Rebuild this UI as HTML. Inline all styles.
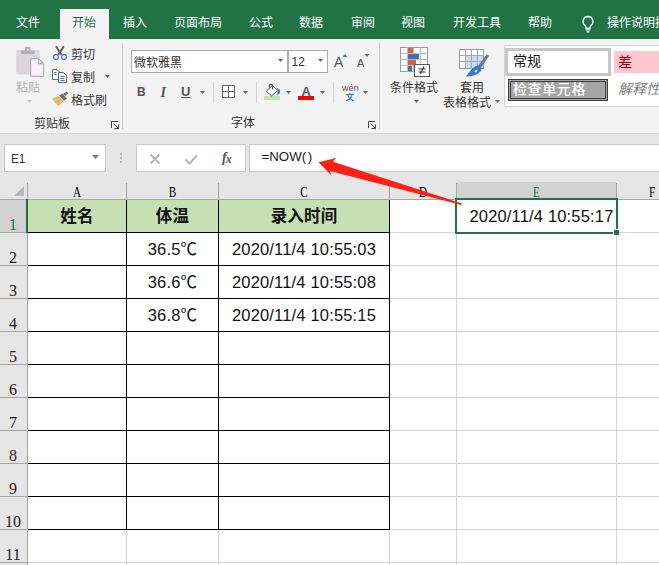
<!DOCTYPE html>
<html><head><meta charset="utf-8">
<style>
html,body{margin:0;padding:0;}
body{width:659px;height:565px;overflow:hidden;position:relative;background:#fff;font-family:"Liberation Sans","Noto Sans CJK SC",sans-serif;font-size:12px;color:#333;}
.a{position:absolute;}
.t{position:absolute;white-space:nowrap;line-height:1;}
#tabs{left:0;top:0;width:659px;height:39px;background:#217346;}
#tabs .t{color:#fff;font-size:12px;top:17px;}
#acttab{left:60px;top:9px;width:49px;height:30px;background:#f3f3f3;}
#ribbon{left:0;top:39px;width:659px;height:94px;background:#f3f3f3;}
#ribline{left:0;top:133px;width:659px;height:1px;background:#dadada;}
#fbar{left:0;top:134px;width:659px;height:47px;background:#e6e6e6;}
.box{position:absolute;background:#fff;border:1px solid #c8c8c8;box-sizing:border-box;}
.sep{position:absolute;width:1px;background:#d4d4d4;}
.dd{position:absolute;width:5px;height:3px;background:#666;clip-path:polygon(0 0,100% 0,50% 100%);margin-top:-1px;}
.rt{color:#333;font-size:12px;}
#grid{left:0;top:181px;width:659px;height:384px;}
.gl{position:absolute;background:#d4d4d4;}
.bl{position:absolute;background:#000;}
.cell{position:absolute;text-align:center;font-size:16.500px;letter-spacing:.17px;color:#111;line-height:33px;white-space:nowrap;}
.hd{font-weight:bold;}
.chl{transform:scaleX(.8);}
.chl,.rhl{text-align:center;font-family:"Liberation Serif","Noto Serif CJK SC",serif;font-size:14px;}
.rhl{font-size:16px;}
</style></head><body>

<!-- tab strip -->
<div id="tabs" class="a">
  <div id="acttab" class="a"></div>
  <span class="t" style="left:16px">文件</span>
  <span class="t" style="left:72px;color:#217346">开始</span>
  <span class="t" style="left:123px">插入</span>
  <span class="t" style="left:174px">页面布局</span>
  <span class="t" style="left:249px">公式</span>
  <span class="t" style="left:299px">数据</span>
  <span class="t" style="left:351px">审阅</span>
  <span class="t" style="left:401px">视图</span>
  <span class="t" style="left:453px">开发工具</span>
  <span class="t" style="left:528px">帮助</span>
  <span class="t" style="left:607px">操作说明搜索</span>
  <svg class="a" style="left:579px;top:13.500px" width="18" height="20" viewBox="0 0 18 20"><path d="M9 2.5a5 5 0 0 0-2.8 9.1c.5.5.8 1.200.8 2v.9h4v-.9c0-.8.300-1.500.8-2A5 5 0 0 0 9 2.500z" fill="none" stroke="#fff" stroke-width="1.300"/><path d="M6.800 16h4.400M7.600 17.800h2.800" stroke="#fff" stroke-width="1.200"/></svg>
</div>

<!-- ribbon -->
<div id="ribbon" class="a"></div>
<div id="ribline" class="a"></div>
<div id="fbar" class="a"></div>

<div id="rib" class="a" style="left:0;top:0">
  <!-- clipboard group -->
  <svg class="a" style="left:14px;top:45px" width="32" height="33" viewBox="0 0 32 33">
    <rect x="2.250" y="5.200" width="23.500" height="24.300" rx="1" fill="#dad6da"/>
    <rect x="7" y="5.400" width="13.600" height="3.600" rx=".8" fill="#b3afb3"/>
    <rect x="11" y="2" width="5.700" height="4.500" rx="1.200" fill="#b3afb3"/>
    <circle cx="13.850" cy="4.600" r="1" fill="#f3f3f3"/>
    <path d="M16.700 13.700h8l5 5v12.600h-13z" fill="#f6f1f6" stroke="#aaa6aa" stroke-width="1"/>
    <path d="M24.700 13.700v5h5" fill="none" stroke="#aaa6aa" stroke-width="1"/>
  </svg>
  <span class="t" style="left:16px;top:82px;color:#b2b2b2;font-size:12px">粘贴</span>
  <div class="dd" style="left:27px;top:101px;background:#c0c0c0"></div>

  <svg class="a" style="left:52px;top:44px" width="16" height="17" viewBox="0 0 16 17">
    <path d="M4 2.200L9.400 10.800M11.800 2.200L6.400 10.800" stroke="#5a5a5a" stroke-width="1.900" fill="none"/>
    <circle cx="4" cy="13" r="2.400" fill="none" stroke="#3b73b9" stroke-width="1.100"/>
    <circle cx="12" cy="13" r="2.400" fill="none" stroke="#3b73b9" stroke-width="1.100"/>
  </svg>
  <span class="t rt" style="left:71px;top:49px">剪切</span>

  <svg class="a" style="left:51px;top:68px" width="17" height="17" viewBox="0 0 17 17">
    <path d="M1.500 1.500h4.500l2.500 2.500v7.500h-7z" fill="#fff" stroke="#666" stroke-width="1"/>
    <path d="M3 4.500h2.500M3 6.500h2.500" stroke="#3b73b9" stroke-width="1"/>
    <path d="M7.500 4.500h5l3 3v7h-8z" fill="#fff" stroke="#666" stroke-width="1"/>
    <path d="M9.500 8.500h4M9.500 10.500h4M9.500 12.500h4" stroke="#3b73b9" stroke-width="1"/>
  </svg>
  <span class="t rt" style="left:71px;top:72px">复制</span>
  <div class="dd" style="left:105px;top:76px"></div>

  <svg class="a" style="left:51px;top:91px" width="18" height="16" viewBox="0 0 18 16">
    <path d="M1.100 7.800L7.800 5L12.500 10.200L7.300 14.900z" fill="#eab765"/>
    <path d="M8.300 4.600L11.500 2.600L16 7.500L12.900 9.800z" fill="#6e6e6e"/>
    <path d="M12.400 2.800L15.500.600L17.300 2.600L14.200 4.900z" fill="#6e6e6e"/>
  </svg>
  <span class="t rt" style="left:71px;top:95px">格式刷</span>

  <span class="t rt" style="left:34px;top:118px">剪贴板</span>
  <svg class="a" style="left:111px;top:121px" width="9" height="9" viewBox="0 0 9 9"><path d="M.5 7V.5H7M2.500 2.500l5 5M7.500 3.500v4h-4" fill="none" stroke="#444" stroke-width="1"/></svg>
  <div class="sep" style="left:122px;top:43px;height:86px;background:#c8c8c8"></div>

  <!-- font group -->
  <div class="box" style="left:131px;top:50px;width:157px;height:23px;border-color:#ababab"></div>
  <div class="box" style="left:288px;top:50px;width:40px;height:23px;border-color:#ababab"></div>
  <span class="t rt" style="left:134px;top:57px">微软雅黑</span>
  <div class="dd" style="left:278px;top:60px"></div>
  <span class="t rt" style="left:291.500px;top:56px;font-size:12px">12</span>
  <div class="dd" style="left:318px;top:60px"></div>

  <span class="t" style="left:334px;top:55px;font-size:14px;color:#555">A</span>
  <div class="a" style="left:342.500px;top:54px;width:5px;height:3px;background:#3b73b9;clip-path:polygon(0 100%,100% 100%,50% 0)"></div>
  <span class="t" style="left:357px;top:58px;font-size:11px;color:#555">A</span>
  <div class="a" style="left:364.500px;top:54px;width:5px;height:3px;background:#3b73b9;clip-path:polygon(0 0,100% 0,50% 100%)"></div>

  <span class="t" style="left:137px;top:86px;font-size:12px;font-weight:bold;color:#555">B</span>
  <span class="t" style="left:160.500px;top:85.500px;font-size:14px;font-style:italic;font-weight:bold;color:#555;font-family:'Liberation Serif',serif">I</span>
  <span class="t" style="left:181px;top:85px;font-size:13px;font-weight:bold;color:#555;text-decoration:underline">U</span>
  <div class="dd" style="left:200px;top:92px"></div>
  <div class="sep" style="left:213px;top:82px;height:21px"></div>
  <svg class="a" style="left:222px;top:85px" width="14" height="14" viewBox="0 0 14 14"><path d="M.5.500h12v12h-12zM6.500.500v12M.5 6.500h12" fill="#fff" stroke="#666" stroke-width="1"/></svg>
  <div class="dd" style="left:243px;top:92px"></div>
  <div class="sep" style="left:256px;top:82px;height:21px"></div>

  <svg class="a" style="left:263px;top:83px" width="19" height="18" viewBox="0 0 19 18">
    <rect x="1" y="13" width="16" height="4" fill="#c6e0b4"/>
    <path d="M13 4.800Q17.800 6.200 17 9.200Q16.300 11.800 14.200 12.600L14.300 9.500L15.200 7.400Z" fill="#3b73b9"/>
    <path d="M9.300 2.200L14.700 7.500L8.700 12.900L3.300 8.400Z" fill="#fff" stroke="#555" stroke-width="1"/>
    <path d="M6.400 5.500V1.500H9.500V6.500" fill="none" stroke="#555" stroke-width="1"/>
  </svg>
  <div class="dd" style="left:286px;top:92px"></div>
  <span class="t" style="left:301.500px;top:84.500px;font-size:13px;font-weight:bold;color:#5a5a5a">A</span>
  <div class="a" style="left:298px;top:96px;width:16px;height:4px;background:#f00"></div>
  <div class="dd" style="left:320px;top:92px"></div>
  <div class="sep" style="left:333px;top:82px;height:21px"></div>
  <span class="t" style="left:342px;top:84px;font-size:9px;color:#555">wén</span>
  <span class="t" style="left:345.500px;top:92.500px;font-size:8.500px;color:#3b73b9;font-weight:bold">文</span>
  <div class="dd" style="left:363px;top:92px"></div>

  <span class="t rt" style="left:231px;top:117px">字体</span>
  <svg class="a" style="left:368px;top:121px" width="9" height="9" viewBox="0 0 9 9"><path d="M.5 7V.5H7M2.500 2.500l5 5M7.500 3.500v4h-4" fill="none" stroke="#444" stroke-width="1"/></svg>
  <div class="sep" style="left:379px;top:43px;height:86px;background:#c8c8c8"></div>

  <!-- styles group -->
  <svg class="a" style="left:399px;top:46px" width="33" height="32" viewBox="0 0 33 32">
    <rect x="1.500" y="1.500" width="27" height="24" fill="#fff" stroke="#9a9a9a"/>
    <path d="M8.500 1.500v24M14.500 1.500v24M21.500 1.500v24M1.500 7.500h27M1.500 13.500h27M1.500 19.500h27" stroke="#bdbdbd" fill="none"/>
    <rect x="9" y="2" width="5" height="5" fill="#d9603b"/>
    <rect x="9" y="8" width="11" height="5" fill="#3b73b9"/>
    <rect x="9" y="14" width="8" height="5" fill="#d9603b"/>
    <rect x="9" y="20" width="4" height="5" fill="#3b73b9"/>
    <rect x="15.500" y="18.500" width="15" height="12" fill="#fff" stroke="#555"/>
    <path d="M19.500 23h7M19.500 26h7M25 20.500l-3.600 7.500" stroke="#333" stroke-width="1.100" fill="none"/>
  </svg>
  <span class="t rt" style="left:390px;top:82px">条件格式</span>
  <div class="dd" style="left:414px;top:101px"></div>

  <svg class="a" style="left:458px;top:48px" width="32" height="30" viewBox="0 0 32 30">
    <rect x="1.500" y="1.500" width="24" height="19" fill="#fff" stroke="#9a9a9a"/>
    <rect x="7" y="7" width="18" height="13" fill="#c9daf0"/>
    <path d="M7.500 1.500v19M13.500 1.500v19M19.500 1.500v19M1.500 7.500h24M1.500 13.500h24" stroke="#a8a8a8" fill="none"/>
    <path d="M29.900 7.100L21.500 18.800" stroke="#777" stroke-width="3" fill="none"/>
    <path d="M20.500 17.500C16 17.500 13 22 8 28.200c6 .8 11-1.200 14.500-4.700 1.500-1.500 1.200-4-.5-5.500z" fill="#3b7bc8"/>
    <ellipse cx="18" cy="23" rx="1.600" ry="1" transform="rotate(-40 18 23)" fill="#e8f0fa"/>
  </svg>
  <span class="t rt" style="left:460px;top:82px">套用</span>
  <span class="t rt" style="left:443px;top:97px">表格格式</span>
  <div class="dd" style="left:495px;top:101px"></div>

  <div class="box" style="left:504px;top:45px;width:160px;height:62px;border-color:#d6d6d6"></div>
  <div class="a" style="left:505px;top:48px;width:106px;height:28px;box-sizing:border-box;border:3px solid #c6c6c6;background:#fff"></div>
  <span class="t" style="left:513px;top:53.500px;font-size:14px;color:#111">常规</span>
  <div class="a" style="left:614px;top:51px;width:50px;height:22px;background:#ffc7ce"></div>
  <span class="t" style="left:618px;top:55px;font-size:14px;color:#9c0006">差</span>
  <div class="a" style="left:508px;top:79px;width:100px;height:22px;box-sizing:border-box;border:3px double #3f3f3f;background:#a5a5a5"></div>
  <span class="t" style="left:513px;top:82px;font-size:14px;color:#fff;font-weight:500;letter-spacing:.6px">检查单元格</span>
  <span class="t" style="left:618px;top:82px;font-size:14px;color:#7f7f7f;font-style:italic">解释性文本</span>
</div>

<!-- formula bar -->
<div class="box" style="left:4px;top:144px;width:102px;height:28px"></div>
<span class="t" style="left:10.500px;top:151.500px;font-size:13px;color:#333;transform:scaleX(.9);transform-origin:0 0">E1</span>
<div class="dd" style="left:92px;top:156px;width:7px;height:4px;background:#777"></div>
<div class="a" style="left:120px;top:153px;width:2px;height:2px;background:#b0b0b0;box-shadow:0 4px 0 #b0b0b0,0 8px 0 #b0b0b0"></div>
<div class="box" style="left:136px;top:144px;width:110px;height:28px"></div>
<svg class="a" style="left:149px;top:153px" width="12" height="12" viewBox="0 0 12 12"><path d="M1.500 1.500l9 9M10.500 1.500l-9 9" stroke="#b4b4b4" stroke-width="1.800" fill="none"/></svg>
<svg class="a" style="left:184px;top:153px" width="15" height="12" viewBox="0 0 15 12"><path d="M1.500 6.500l4 4 7.500-8" stroke="#b4b4b4" stroke-width="2" fill="none"/></svg>
<span class="t" style="left:222px;top:151px;font-size:14px;color:#555;font-family:'Liberation Serif',serif;font-style:italic;font-weight:bold">f<span style="font-size:12px;margin-left:-1px;position:relative;top:1px">x</span></span>
<div class="box" style="left:249px;top:144px;width:420px;height:28px"></div>
<span class="t" style="left:261.500px;top:150px;font-size:13.300px;color:#222">=NOW<span style="letter-spacing:1.500px">()</span></span>

<!-- grid -->
<!--GRID-->
<div class="a" style="left:0;top:181px;width:659px;height:19px;background:#e6e6e6"></div>
<div class="a" style="left:0;top:199px;width:28px;height:366px;background:#e6e6e6"></div>
<div class="a" style="left:457px;top:182px;width:159px;height:17px;background:#d2d2d2"></div>
<div class="a" style="left:0;top:200px;width:27px;height:32px;background:#d2d2d2"></div>
<div class="a" style="left:0;top:199px;width:659px;height:1px;background:#a6a6a6"></div>
<div class="a" style="left:27px;top:183px;width:1px;height:382px;background:#a6a6a6"></div>
<svg class="a" style="left:14px;top:186px" width="10" height="10" viewBox="0 0 10 10"><path d="M10 0v10H0z" fill="#b7b7b7"/></svg>
<div class="a" style="left:126px;top:183px;width:1px;height:16px;background:#a6a6a6"></div>
<span class="t chl" style="left:28px;width:98px;top:186px;color:#000">A</span>
<div class="a" style="left:218px;top:183px;width:1px;height:16px;background:#a6a6a6"></div>
<span class="t chl" style="left:127px;width:91px;top:186px;color:#000">B</span>
<div class="a" style="left:389px;top:183px;width:1px;height:16px;background:#a6a6a6"></div>
<span class="t chl" style="left:219px;width:170px;top:186px;color:#000">C</span>
<div class="a" style="left:456px;top:183px;width:1px;height:16px;background:#a6a6a6"></div>
<span class="t chl" style="left:390px;width:66px;top:186px;color:#000">D</span>
<div class="a" style="left:616px;top:183px;width:1px;height:16px;background:#a6a6a6"></div>
<span class="t chl" style="left:457px;width:159px;top:186px;color:#217346">E</span>
<div class="a" style="left:687px;top:183px;width:1px;height:16px;background:#a6a6a6"></div>
<span class="t chl" style="left:617px;width:70px;top:186px;color:#000">F</span>
<div class="a" style="left:0;top:232px;width:27px;height:1px;background:#a6a6a6"></div>
<span class="t rhl" style="left:0;width:26px;top:217px;color:#217346">1</span>
<div class="a" style="left:0;top:265px;width:27px;height:1px;background:#a6a6a6"></div>
<span class="t rhl" style="left:0;width:26px;top:250px;color:#222">2</span>
<div class="a" style="left:0;top:298px;width:27px;height:1px;background:#a6a6a6"></div>
<span class="t rhl" style="left:0;width:26px;top:283px;color:#222">3</span>
<div class="a" style="left:0;top:331px;width:27px;height:1px;background:#a6a6a6"></div>
<span class="t rhl" style="left:0;width:26px;top:316px;color:#222">4</span>
<div class="a" style="left:0;top:364px;width:27px;height:1px;background:#a6a6a6"></div>
<span class="t rhl" style="left:0;width:26px;top:349px;color:#222">5</span>
<div class="a" style="left:0;top:397px;width:27px;height:1px;background:#a6a6a6"></div>
<span class="t rhl" style="left:0;width:26px;top:382px;color:#222">6</span>
<div class="a" style="left:0;top:430px;width:27px;height:1px;background:#a6a6a6"></div>
<span class="t rhl" style="left:0;width:26px;top:415px;color:#222">7</span>
<div class="a" style="left:0;top:463px;width:27px;height:1px;background:#a6a6a6"></div>
<span class="t rhl" style="left:0;width:26px;top:448px;color:#222">8</span>
<div class="a" style="left:0;top:496px;width:27px;height:1px;background:#a6a6a6"></div>
<span class="t rhl" style="left:0;width:26px;top:481px;color:#222">9</span>
<div class="a" style="left:0;top:529px;width:27px;height:1px;background:#a6a6a6"></div>
<span class="t rhl" style="left:0;width:26px;top:514px;color:#222">10</span>
<div class="a" style="left:0;top:562px;width:27px;height:1px;background:#a6a6a6"></div>
<span class="t rhl" style="left:0;width:26px;top:547px;color:#222">11</span>
<div class="a" style="left:0;top:595px;width:27px;height:1px;background:#a6a6a6"></div>
<span class="t rhl" style="left:0;width:26px;top:580px;color:#222">12</span>
<div class="gl" style="left:126px;top:200px;width:1px;height:365px"></div>
<div class="gl" style="left:218px;top:200px;width:1px;height:365px"></div>
<div class="gl" style="left:389px;top:200px;width:1px;height:365px"></div>
<div class="gl" style="left:456px;top:200px;width:1px;height:365px"></div>
<div class="gl" style="left:616px;top:200px;width:1px;height:365px"></div>
<div class="gl" style="left:687px;top:200px;width:1px;height:365px"></div>
<div class="gl" style="left:28px;top:232px;width:631px;height:1px"></div>
<div class="gl" style="left:28px;top:265px;width:631px;height:1px"></div>
<div class="gl" style="left:28px;top:298px;width:631px;height:1px"></div>
<div class="gl" style="left:28px;top:331px;width:631px;height:1px"></div>
<div class="gl" style="left:28px;top:364px;width:631px;height:1px"></div>
<div class="gl" style="left:28px;top:397px;width:631px;height:1px"></div>
<div class="gl" style="left:28px;top:430px;width:631px;height:1px"></div>
<div class="gl" style="left:28px;top:463px;width:631px;height:1px"></div>
<div class="gl" style="left:28px;top:496px;width:631px;height:1px"></div>
<div class="gl" style="left:28px;top:529px;width:631px;height:1px"></div>
<div class="gl" style="left:28px;top:562px;width:631px;height:1px"></div>
<div class="gl" style="left:28px;top:595px;width:631px;height:1px"></div>
<div class="a" style="left:28px;top:200px;width:361px;height:32px;background:#c6e0b4"></div>
<div class="bl" style="left:126px;top:200px;width:1px;height:330px"></div>
<div class="bl" style="left:218px;top:200px;width:1px;height:330px"></div>
<div class="bl" style="left:389px;top:200px;width:1px;height:330px"></div>
<div class="bl" style="left:28px;top:232px;width:362px;height:1px"></div>
<div class="bl" style="left:28px;top:265px;width:362px;height:1px"></div>
<div class="bl" style="left:28px;top:298px;width:362px;height:1px"></div>
<div class="bl" style="left:28px;top:331px;width:362px;height:1px"></div>
<div class="bl" style="left:28px;top:364px;width:362px;height:1px"></div>
<div class="bl" style="left:28px;top:397px;width:362px;height:1px"></div>
<div class="bl" style="left:28px;top:430px;width:362px;height:1px"></div>
<div class="bl" style="left:28px;top:463px;width:362px;height:1px"></div>
<div class="bl" style="left:28px;top:496px;width:362px;height:1px"></div>
<div class="bl" style="left:28px;top:529px;width:362px;height:1px"></div>
<div class="a" style="left:26px;top:199px;width:2px;height:34px;background:#217346"></div>
<span class="cell hd" style="left:28px;width:98px;top:200px">姓名</span>
<span class="cell hd" style="left:127px;width:91px;top:200px">体温</span>
<span class="cell hd" style="left:219px;width:170px;top:200px">录入时间</span>
<span class="cell " style="left:127px;width:91px;top:233px">36.5℃</span>
<span class="cell " style="left:127px;width:91px;top:266px">36.6℃</span>
<span class="cell " style="left:127px;width:91px;top:299px">36.8℃</span>
<span class="cell " style="left:219px;width:170px;top:233px">2020/11/4 10:55:03</span>
<span class="cell " style="left:219px;width:170px;top:266px">2020/11/4 10:55:08</span>
<span class="cell " style="left:219px;width:170px;top:299px">2020/11/4 10:55:15</span>
<div class="a" style="left:455px;top:198px;width:163px;height:36px;box-sizing:border-box;border:2px solid #217346;background:#fff"></div>
<div class="a" style="left:613px;top:229px;width:5px;height:5px;background:#217346;border-left:1px solid #fff;border-top:1px solid #fff"></div>
<span class="cell" style="left:457px;width:156.500px;top:200px;text-align:right">2020/11/4 10:55:17</span>
<svg class="a" style="left:0;top:0" width="659" height="565" viewBox="0 0 659 565"><path d="M318.500 162.200L336.100 157.900L333 161.800L461.900 203.500L461.400 204.900L330 170.900L331.200 175.200Z" fill="#fe2015"/></svg>
<!--/GRID-->
</body></html>
